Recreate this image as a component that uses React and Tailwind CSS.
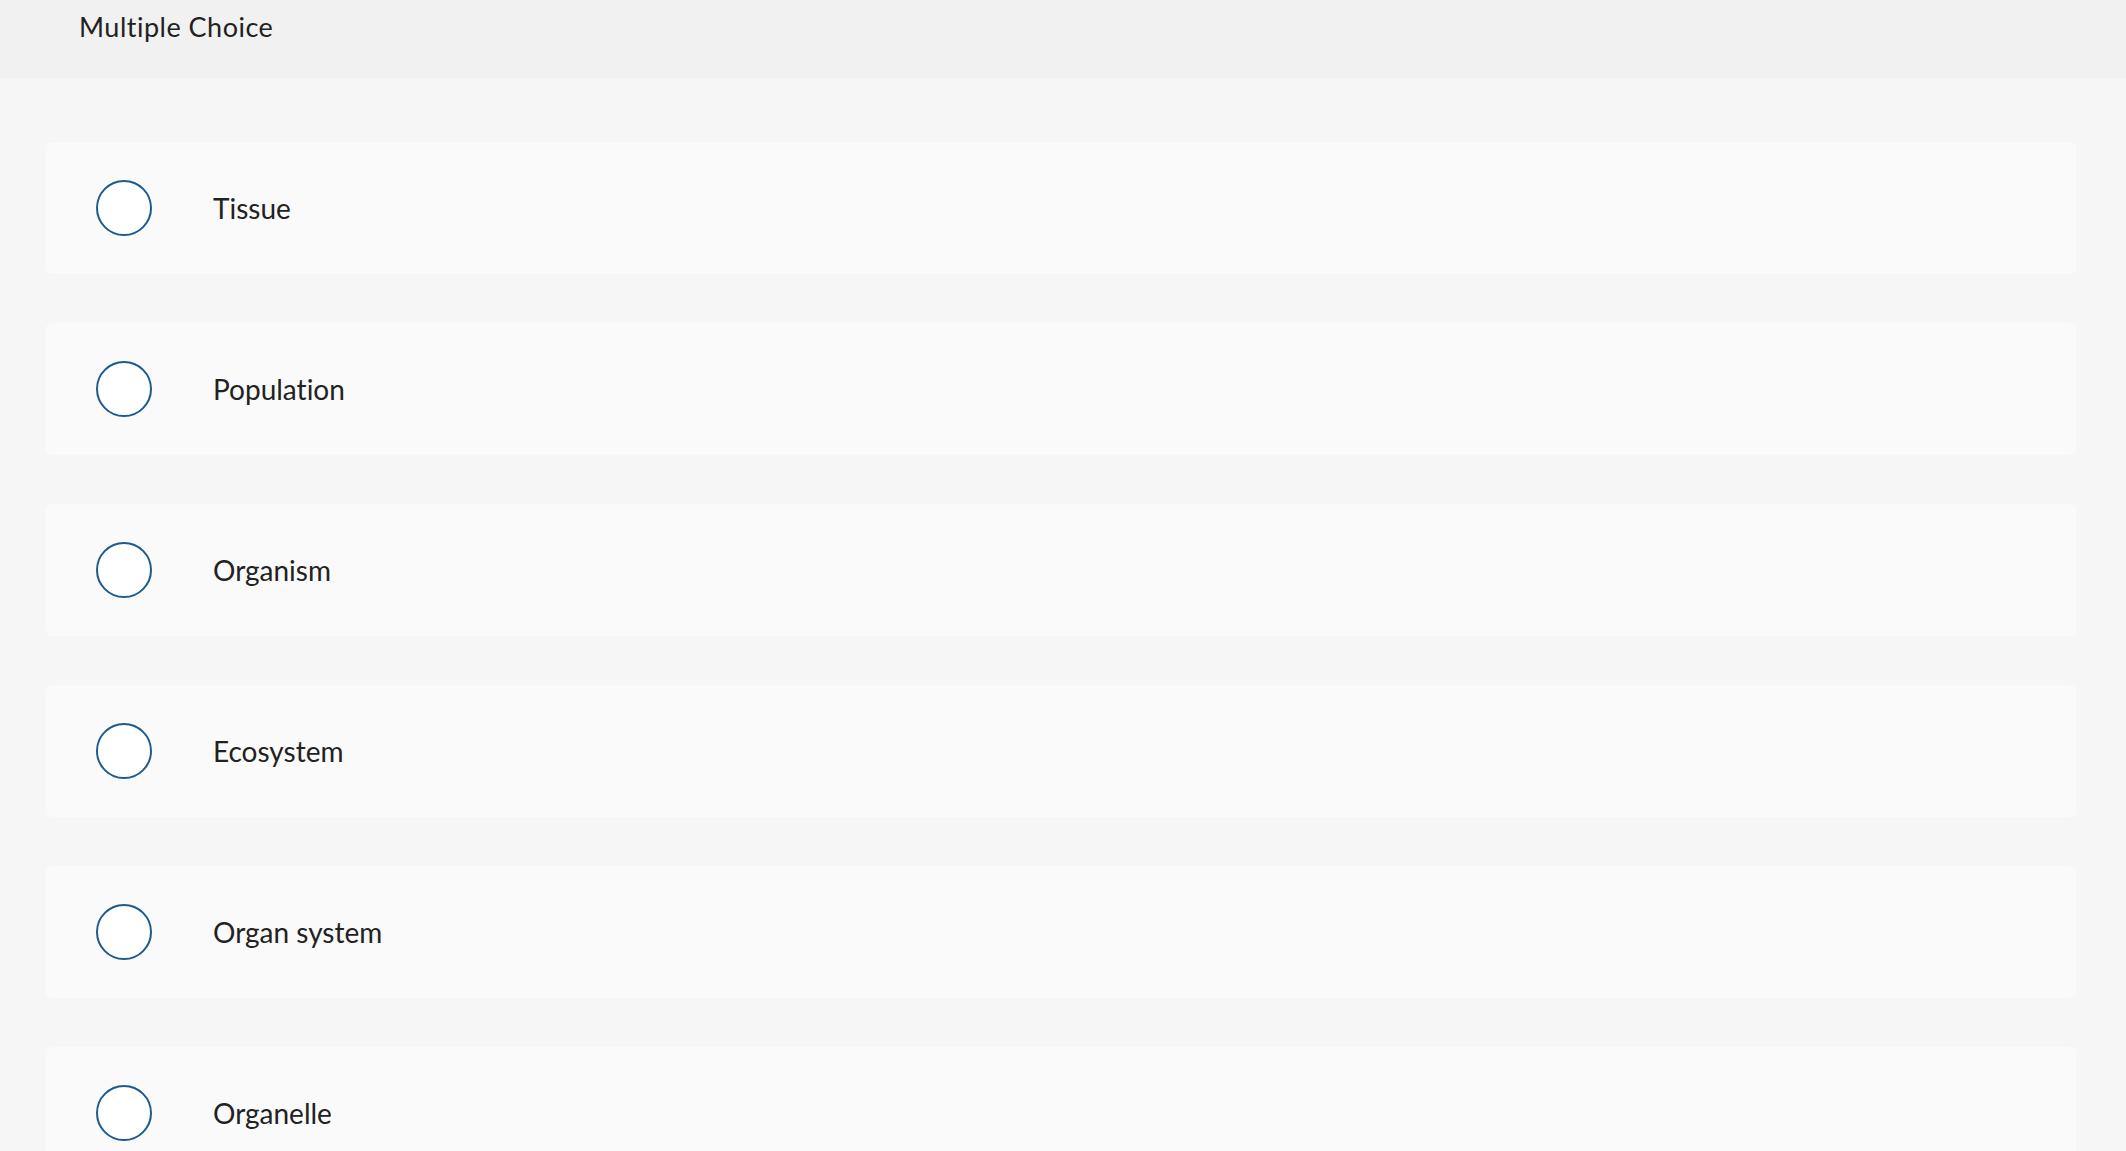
import React from 'react';

const options = ['Tissue', 'Population', 'Organism', 'Ecosystem', 'Organ system', 'Organelle'];

const App = () => {
  return (
    <div className="min-h-screen bg-[#f6f6f6] text-[#222] [font-variant-ligatures:none]" style={{ fontFamily: 'Lato, "Open Sans", sans-serif' }}>
      <div className="h-[78px] bg-[#f1f1f1] pl-[79px] pt-[11px]">
        <h1 className="text-[27px] leading-[32px] font-normal tracking-[0.5px]">Multiple Choice</h1>
      </div>
      <div className="flex flex-col gap-[49px] pl-[46px] pr-[50px] pt-[64px] pb-[40px]">
        {options.map((opt) => (
          <label key={opt} className="flex h-[132px] items-center rounded-[6px] bg-[#fafafa] pl-[50px] cursor-pointer">
            <span className="h-[56px] w-[56px] shrink-0 rounded-full border-2 border-[#1f5a8f] bg-white"></span>
            <span className="ml-[61px] text-[28px] leading-none">{opt}</span>
          </label>
        ))}
      </div>
    </div>
  );
};

export default App;
